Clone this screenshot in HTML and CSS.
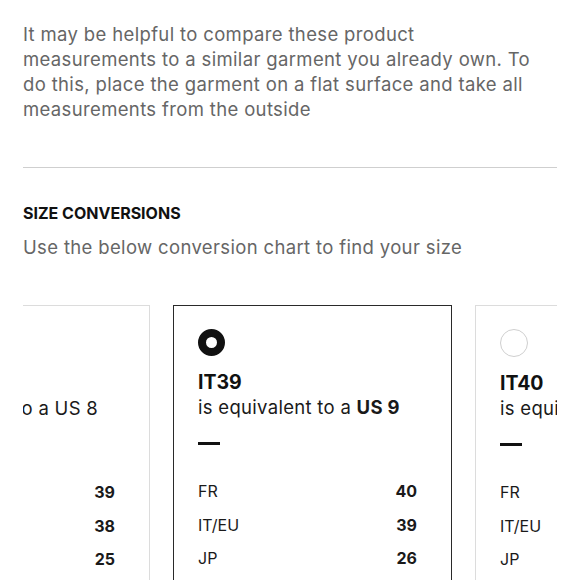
FILE: index.html
```html
<!DOCTYPE html>
<html lang="en">
<head>
<meta charset="utf-8">
<title>Size conversions</title>
<link rel="stylesheet" href="styles.css">
</head>
<body>
<main class="page">
  <p class="intro">It may be helpful to compare these product measurements to a similar garment you already own. To do this, place the garment on a flat surface and take all measurements from the outside</p>
  <hr class="divider">
  <h2 class="heading">SIZE CONVERSIONS</h2>
  <p class="sub">Use the below conversion chart to find your size</p>
  <div class="carousel">
    <div class="track">
      <div class="card">
        <span class="radio"></span>
        <div class="size">IT38</div>
        <div class="equiv">is equivalent to a US 8</div>
        <div class="dash"></div>
        <div class="rows">
          <div class="row"><span>FR</span><b>39</b></div>
          <div class="row"><span>IT/EU</span><b>38</b></div>
          <div class="row"><span>JP</span><b>25</b></div>
        </div>
      </div>
      <div class="card selected">
        <span class="radio"></span>
        <div class="size">IT39</div>
        <div class="equiv">is equivalent to a <b>US 9</b></div>
        <div class="dash"></div>
        <div class="rows">
          <div class="row"><span>FR</span><b>40</b></div>
          <div class="row"><span>IT/EU</span><b>39</b></div>
          <div class="row"><span>JP</span><b>26</b></div>
        </div>
      </div>
      <div class="card">
        <span class="radio"></span>
        <div class="size">IT40</div>
        <div class="equiv">is equivalent to a US 10</div>
        <div class="dash"></div>
        <div class="rows">
          <div class="row"><span>FR</span><b>41</b></div>
          <div class="row"><span>IT/EU</span><b>40</b></div>
          <div class="row"><span>JP</span><b>27</b></div>
        </div>
      </div>
    </div>
  </div>
</main>
</body>
</html>
```

FILE: styles.css
```css
* { box-sizing: border-box; }
html, body { margin: 0; padding: 0; background: #fff; }
body {
  font-family: Inter, "Liberation Sans", Arial, sans-serif;
  color: #1a1a1a;
}
.page {
  padding: 22px 23px 0;
  width: 580px;
  height: 580px;
  overflow: hidden;
}
.intro {
  margin: 0;
  max-width: 515px;
  font-size: 18.5px;
  line-height: 25px;
  color: #666;
  letter-spacing: 0.35px;
}
.divider {
  margin: 45px 0 0;
  border: 0;
  border-top: 1px solid #cfcfcf;
  height: 0;
}
.heading {
  margin: 35px 0 0;
  font-size: 16px;
  line-height: 20px;
  font-weight: 700;
  letter-spacing: 0;
  color: #111;
}
.sub {
  margin: 12px 0 0;
  font-size: 18.5px;
  line-height: 25px;
  color: #666;
  letter-spacing: 0.35px;
}
.carousel {
  margin-top: 45px;
  overflow: hidden;
}
.track {
  display: flex;
  gap: 23px;
  margin-left: -152px;
}
.card {
  flex: 0 0 279px;
  height: 320px;
  border: 1px solid #dcdcdc;
  padding: 23px 34px 0 24px;
}
.card.selected {
  border: 1.5px solid #2a2a2a;
}
.radio {
  display: block;
  width: 28px;
  height: 28px;
  border-radius: 50%;
  border: 1px solid #cfcfcf;
}
.selected .radio {
  width: 27px;
  height: 27px;
  border: 8.5px solid #111;
}
.size {
  margin-top: 14px;
  font-size: 19.5px;
  line-height: 24px;
  font-weight: 700;
  color: #111;
}
.equiv {
  font-size: 18.5px;
  line-height: 26px;
  color: #1a1a1a;
  letter-spacing: 0.3px;
  white-space: nowrap;
}
.equiv b { font-weight: 700; }
.dash {
  margin-top: 22px;
  width: 22px;
  height: 3px;
  background: #111;
}
.rows {
  margin-top: 35px;
  display: flex;
  flex-direction: column;
  gap: 11.5px;
}
.row {
  display: flex;
  justify-content: space-between;
  font-size: 16px;
  line-height: 22px;
  color: #1a1a1a;
}
.row b { font-weight: 700; }
```
